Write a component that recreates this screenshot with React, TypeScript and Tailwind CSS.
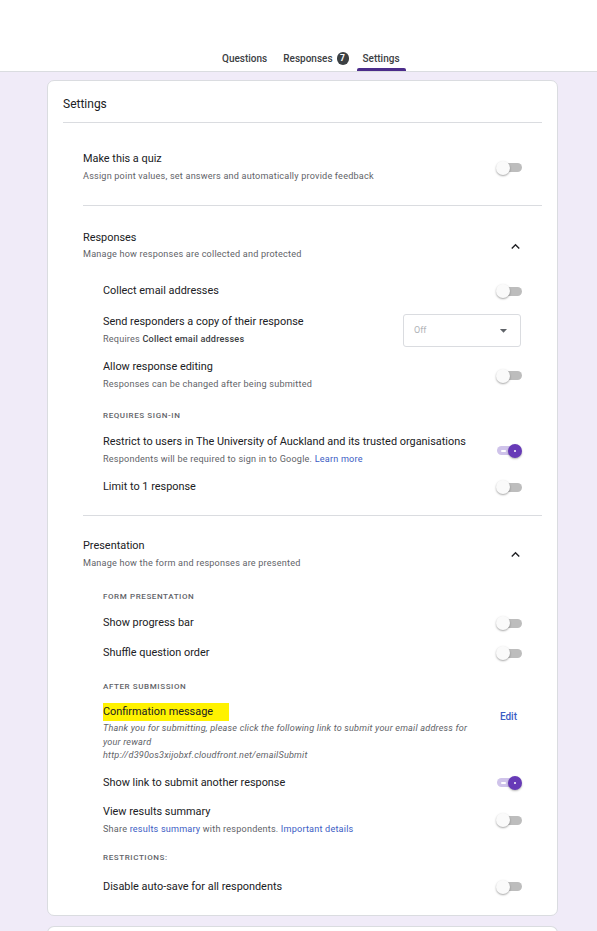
import React from "react";

function Toggle({ on = false }: { on?: boolean }) {
  if (on) {
    return (
      <div className="relative mr-[20px] h-[14px] w-[26px] shrink-0">
        <div className="absolute left-[1px] top-[2.5px] h-[9px] w-[20px] rounded-full bg-[#cfc3ea]">
          <div className="absolute left-[4px] top-[4px] h-[1.5px] w-[5px] rounded bg-white" />
        </div>
        <div className="absolute right-0 top-0 flex h-[14px] w-[14px] items-center justify-center rounded-full bg-[#673ab7] shadow-[0_1px_2px_rgba(0,0,0,0.3)]">
          <div className="h-[2px] w-[2px] rounded-full bg-white" />
        </div>
      </div>
    );
  }
  return (
    <div className="relative mr-[20px] h-[14px] w-[26px] shrink-0">
      <div className="absolute left-[4px] top-[2.5px] h-[9px] w-[22px] rounded-full bg-[#bdbdbd]" />
      <div className="absolute left-0 top-0 h-[14px] w-[14px] rounded-full bg-[#fafafa] shadow-[0_1px_2px_rgba(0,0,0,0.35)]" />
    </div>
  );
}

function Chevron() {
  return (
    <svg viewBox="0 0 24 24" className="mr-[18px] h-[17px] w-[17px] shrink-0" fill="#202124">
      <path d="M12 8l-6 6 1.41 1.41L12 10.83l4.59 4.58L18 14z" />
    </svg>
  );
}

function Title({ children }: { children: React.ReactNode }) {
  return <div className="text-[10.9px] leading-[14px] text-[#202124]">{children}</div>;
}

function Sub({ children, className = "" }: { children: React.ReactNode; className?: string }) {
  return (
    <div className={`mt-[3px] text-[9.1px] leading-[14px] tracking-[0.2px] text-[#5f6368] ${className}`}>
      {children}
    </div>
  );
}

function Caps({ children, className = "" }: { children: React.ReactNode; className?: string }) {
  return (
    <div className={`text-[8px] font-medium uppercase leading-[10px] tracking-[0.6px] text-[#5f6368] ${className}`}>
      {children}
    </div>
  );
}

function Row({
  className = "",
  title,
  sub,
  right,
}: {
  className?: string;
  title: React.ReactNode;
  sub?: React.ReactNode;
  right: React.ReactNode;
}) {
  return (
    <div className={`flex items-center justify-between ${className}`}>
      <div>
        <Title>{title}</Title>
        {sub && <Sub>{sub}</Sub>}
      </div>
      {right}
    </div>
  );
}

const link = "text-[#3b5cc4]";

export default function App() {
  return (
    <div className="min-h-screen bg-[#f0ebf8] font-['Roboto',sans-serif]">
      {/* Tabs header */}
      <div className="flex h-[72px] items-end border-b border-[#dadce0] bg-white pl-[216px]">
        <div className="flex h-[25px] flex-col px-[6px] pt-[6px]">
          <span className="text-[10px] font-medium leading-[14px] text-[#3c4043]">Questions</span>
        </div>
        <div className="ml-[4px] flex h-[25px] items-start px-[6px] pt-[6px]">
          <span className="text-[10px] font-medium leading-[14px] text-[#3c4043]">Responses</span>
          <span className="ml-[4px] flex h-[13px] w-[12px] items-center justify-center rounded-full bg-[#3c4043] text-[8.5px] font-bold text-white">
            7
          </span>
        </div>
        <div className="ml-[2px] flex h-[25px] flex-col justify-between pt-[6px]">
          <span className="px-[6px] text-[10px] font-medium leading-[14px] text-[#3c4043]">Settings</span>
          <div className="h-[3px] rounded-t-[2px] bg-[#4b2c8a]" />
        </div>
      </div>

      {/* Settings card */}
      <div className="ml-[47px] mt-[8px] w-[511px] rounded-[7px] border border-[#dadce0] bg-white px-[15px] pb-[21px]">
        <div className="flex h-[42px] items-center border-b border-[#dadce0] pt-[4px] text-[12px] text-[#202124]">
          Settings
        </div>

        {/* Quiz */}
        <div className="ml-[20px] border-b border-[#dadce0] pb-[22px] pt-[29px]">
          <Row
            title="Make this a quiz"
            sub="Assign point values, set answers and automatically provide feedback"
            right={<Toggle />}
          />
        </div>

        {/* Responses */}
        <div className="ml-[20px] border-b border-[#dadce0] pb-[21px] pt-[25px]">
          <div className="flex items-center justify-between">
            <div>
              <Title>Responses</Title>
              <Sub className="!mt-[2px]">Manage how responses are collected and protected</Sub>
            </div>
            <Chevron />
          </div>
          <div className="pl-[20px]">
            <Row className="mt-[23px]" title="Collect email addresses" right={<Toggle />} />
            <Row
              className="mt-[16px]"
              title="Send responders a copy of their response"
              sub={
                <>
                  Requires <span className="font-medium text-[#3c4043]">Collect email addresses</span>
                </>
              }
              right={
                <div className="mr-[21px] flex h-[33px] w-[118px] items-center justify-between rounded-[3px] border border-[#dadce0] pl-[10px] pr-[8px]">
                  <span className="text-[9px] text-[#b0b3b8]">Off</span>
                  <svg viewBox="0 0 24 24" className="h-[17px] w-[17px]" fill="#5f6368">
                    <path d="M7 10l5 5 5-5z" />
                  </svg>
                </div>
              }
            />
            <Row
              className="mt-[13px]"
              title="Allow response editing"
              sub="Responses can be changed after being submitted"
              right={<Toggle />}
            />
            <Caps className="mt-[20px]">Requires sign-in</Caps>
            <Row
              className="mt-[14px]"
              title="Restrict to users in The University of Auckland and its trusted organisations"
              sub={
                <>
                  Respondents will be required to sign in to Google. <span className={link}>Learn more</span>
                </>
              }
              right={<Toggle on />}
            />
            <Row className="mt-[14px]" title="Limit to 1 response" right={<Toggle />} />
          </div>
        </div>

        {/* Presentation */}
        <div className="ml-[20px] pt-[23px]">
          <div className="flex items-center justify-between">
            <div>
              <Title>Presentation</Title>
              <Sub>Manage how the form and responses are presented</Sub>
            </div>
            <Chevron />
          </div>
          <div className="pl-[20px]">
            <Caps className="mt-[22px]">Form presentation</Caps>
            <Row className="mt-[14px]" title="Show progress bar" right={<Toggle />} />
            <Row className="mt-[16px]" title="Shuffle question order" right={<Toggle />} />
            <Caps className="mt-[22px]">After submission</Caps>
            <div className="mt-[11px] flex items-start justify-between">
              <div>
                <div className="text-[10.9px] leading-[14px] text-[#202124]">
                  <span className="inline-block bg-[#fff200] py-[2px] pr-[16px]">Confirmation message</span>
                </div>
                <div className="mt-[1px] text-[9.1px] italic leading-[13.5px] tracking-[0.2px] text-[#5f6368]">
                  <div>Thank you for submitting, please click the following link to submit your email address for</div>
                  <div>your reward</div>
                  <div>http://d390os3xijobxf.cloudfront.net/emailSubmit</div>
                </div>
              </div>
              <span className="mr-[25px] mt-[6px] text-[10px] font-medium text-[#3b5cc4]">Edit</span>
            </div>
            <Row className="mt-[13px]" title="Show link to submit another response" right={<Toggle on />} />
            <Row
              className="mt-[15px]"
              title="View results summary"
              sub={
                <>
                  Share <span className={link}>results summary</span> with respondents.{" "}
                  <span className={link}>Important details</span>
                </>
              }
              right={<Toggle />}
            />
            <Caps className="mt-[17px]">Restrictions:</Caps>
            <Row className="mt-[17px]" title="Disable auto-save for all respondents" right={<Toggle />} />
          </div>
        </div>
      </div>

      {/* Next card */}
      <div className="ml-[47px] mt-[10px] h-[40px] w-[511px] rounded-t-[7px] border border-b-0 border-[#dadce0] bg-white" />
    </div>
  );
}
